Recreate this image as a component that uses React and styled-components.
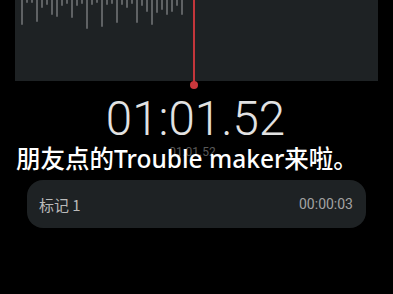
import React from "react";
import styled, { createGlobalStyle } from "styled-components";

const GlobalStyle = createGlobalStyle`
  html, body {
    margin: 0;
    padding: 0;
    background: #000;
  }
  body {
    font-family: Roboto, "Noto Sans CJK SC", sans-serif;
  }
`;

const bars = [
  25, 3, 3, 22, 8, 5, 15, 17, 6, 4, 18, 6, 4, 29, 5, 3, 27, 5, 4, 23, 5, 8, 4,
  23, 6, 12, 25, 13, 10, 15, 12, 6, 15,
];

const Screen = styled.div`
  position: relative;
  width: 393px;
  height: 294px;
  background: #000;
  overflow: hidden;
  display: flex;
  flex-direction: column;
  align-items: center;
`;

const Wave = styled.div`
  position: relative;
  align-self: stretch;
  margin: 0 15px;
  height: 81px;
  background: #1e2224;
  display: flex;
  align-items: flex-start;
  gap: 3.5px;
  padding-left: 6px;
`;

const Bar = styled.span`
  width: 1.5px;
  background: #5f6264;
  border-radius: 0 0 1px 1px;
`;

const Playhead = styled.div`
  position: absolute;
  left: 178px;
  top: 0;
  width: 2px;
  height: 85px;
  background: #c3363b;
`;

const Dot = styled.div`
  position: absolute;
  left: 175px;
  top: 81px;
  width: 8px;
  height: 8px;
  border-radius: 50%;
  background: #c8373c;
`;

const BigTime = styled.div`
  margin-top: 15px;
  margin-left: -2px;
  font-family: Roboto, sans-serif;
  font-weight: 300;
  font-size: 47.5px;
  line-height: 47px;
  color: #e2e2e2;
`;

const SmallTime = styled.div`
  margin-top: 3px;
  margin-left: -8px;
  font-family: Roboto, sans-serif;
  font-size: 12px;
  line-height: 12px;
  color: #5a5a5a;
`;

const Card = styled.div`
  align-self: stretch;
  margin: 22px 27px 0;
  height: 48px;
  border-radius: 16px;
  background: #1e2224;
  display: flex;
  align-items: center;
  justify-content: space-between;
  padding: 0 13px 0 12px;
`;

const Label = styled.span`
  font-family: "Noto Sans CJK SC", Roboto, sans-serif;
  font-size: 15px;
  color: #bababa;
`;

const Stamp = styled.span`
  font-family: Roboto, sans-serif;
  font-size: 14px;
  color: #a3a3a3;
`;

const Caption = styled.div`
  position: absolute;
  left: 16px;
  top: 146px;
  font-family: "Noto Sans", "Noto Sans CJK SC", sans-serif;
  font-size: 24.5px;
  line-height: 25px;
  font-weight: 500;
  color: #fff;
  white-space: nowrap;
`;

export default function App() {
  return (
    <>
      <GlobalStyle />
      <Screen>
        <Wave>
          {bars.map((h, i) => (
            <Bar key={i} style={{ height: h }} />
          ))}
          <Playhead />
          <Dot />
        </Wave>
        <BigTime>01:01.52</BigTime>
        <SmallTime>01:01.52</SmallTime>
        <Card>
          <Label>标记 1</Label>
          <Stamp>00:00:03</Stamp>
        </Card>
        <Caption>朋友点的Trouble maker来啦。</Caption>
      </Screen>
    </>
  );
}
